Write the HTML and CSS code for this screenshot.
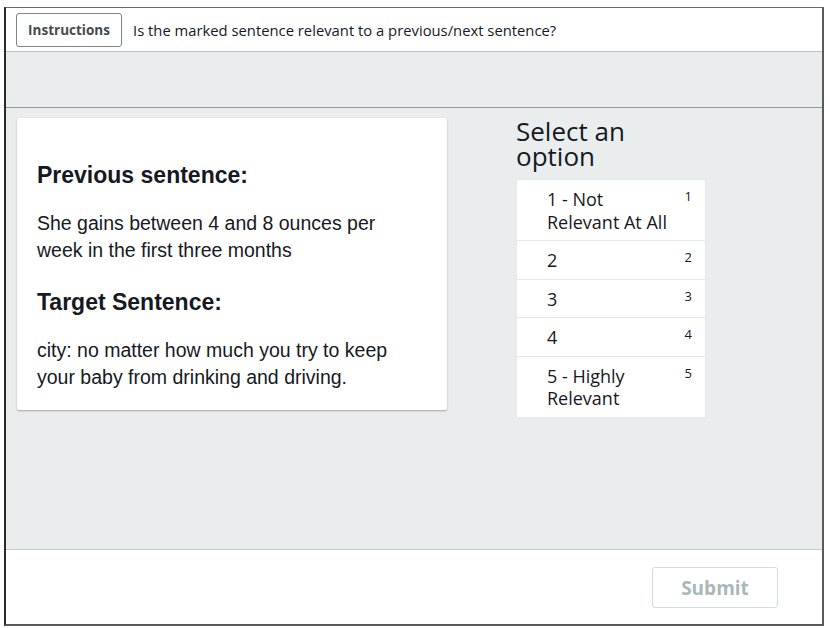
FILE: index.html
```html
<!DOCTYPE html>
<html>
<head>
<meta charset="utf-8">
<link rel="stylesheet" href="styles.css">
</head>
<body>
<div class="frame">
  <header class="topbar">
    <button class="instr-btn">Instructions</button>
    <span class="question">Is the marked sentence relevant to a previous/next sentence?</span>
  </header>
  <div class="band"></div>
  <main class="content">
    <section class="card">
      <h2 class="card-heading first">Previous sentence:</h2>
      <p class="card-text">She gains between 4 and 8 ounces per week in the first three months</p>
      <h2 class="card-heading">Target Sentence:</h2>
      <p class="card-text last">city: no matter how much you try to keep your baby from drinking and driving.</p>
    </section>
    <section class="picker">
      <h3 class="picker-title">Select an option</h3>
      <ul class="options">
        <li class="option"><span class="opt-label">1 - Not <span class="nowrap">Relevant At All</span></span><span class="opt-key">1</span></li>
        <li class="option"><span class="opt-label">2</span><span class="opt-key">2</span></li>
        <li class="option"><span class="opt-label">3</span><span class="opt-key">3</span></li>
        <li class="option"><span class="opt-label">4</span><span class="opt-key">4</span></li>
        <li class="option"><span class="opt-label">5 - Highly Relevant</span><span class="opt-key">5</span></li>
      </ul>
    </section>
  </main>
  <footer class="footer">
    <button class="submit-btn">Submit</button>
  </footer>
</div>
</body>
</html>
```

FILE: styles.css
```css
* { box-sizing: border-box; }
html, body { margin: 0; padding: 0; background: #ffffff; }
body { width: 830px; height: 628px; overflow: hidden; }

.frame {
  margin: 7px 0 0 4px;
  width: 820px;
  height: 619px;
  border-top: 1px solid #6a6a6a;
  border-left: 2px solid #2a2a2a;
  border-right: 2px solid #5a5a5a;
  border-bottom: 2px solid #5a5a5a;
  display: flex;
  flex-direction: column;
  font-family: "Open Sans", "Noto Sans", sans-serif;
  color: #16191f;
}

.topbar {
  height: 44px;
  flex: none;
  display: flex;
  align-items: center;
  gap: 11px;
  padding: 0 0 0 10px;
  border-bottom: 1px solid #b8c2c3;
  background: #fff;
}

.instr-btn {
  height: 34px;
  width: 106px;
  padding: 0;
  border: 1px solid #7d8585;
  border-radius: 3px;
  background: #fff;
  font-family: "Open Sans", sans-serif;
  font-size: 13.5px;
  font-weight: 700;
  color: #444b4c;
}

.question {
  font-size: 14.8px;
  color: #16191f;
}

.band {
  height: 56px;
  flex: none;
  background: #e9eded;
  border-bottom: 1px solid #8e9a9b;
}

.content {
  flex: 1;
  background: #e9eded;
  display: flex;
  align-items: flex-start;
  padding: 10px 0 0 11px;
  gap: 69px;
  border-bottom: 1px solid #c4cccd;
}

.card {
  width: 430px;
  background: #fff;
  padding: 20px 20px 19px 20px;
  box-shadow: 0 1px 2px rgba(0,0,0,0.3);
  border-radius: 2px;
  font-family: "Liberation Sans", Arial, sans-serif;
}

.card-heading {
  margin: 0 0 22px;
  font-size: 23px;
  line-height: 26px;
  font-weight: 700;
  color: #16191f;
}
.card-heading.first { margin-top: 24px; }

.card-text {
  margin: 0 0 25px;
  max-width: 370px;
  font-size: 19.5px;
  line-height: 27px;
  color: #16191f;
}
.card-text.last { margin-bottom: 0; }

.picker {
  width: 190px;
  padding-top: 1px;
}

.picker-title {
  margin: 0 0 10px;
  max-width: 150px;
  font-size: 26px;
  line-height: 25px;
  font-weight: 400;
  color: #16191f;
}

.options {
  list-style: none;
  margin: 0;
  padding: 0;
  width: 190px;
  background: #fff;
  border: 1px solid #e4e8e8;
}

.option {
  display: flex;
  justify-content: space-between;
  align-items: flex-start;
  padding: 8px 13px 7px 30px;
  border-top: 1px solid #e4e8e8;
}
.option:first-child { border-top: none; }

.opt-label {
  font-size: 18px;
  line-height: 22.5px;
  max-width: 136px;
}

.nowrap { white-space: nowrap; }

.opt-key {
  font-size: 13px;
  line-height: 16px;
  color: #16191f;
}

.footer {
  flex: 1;
  max-height: 74px;
  display: flex;
  justify-content: flex-end;
  align-items: flex-start;
  padding: 17px 44px 0 0;
  background: #fff;
}

.submit-btn {
  width: 126px;
  height: 41px;
  border: 1px solid #d5dbdb;
  border-radius: 3px;
  background: #fff;
  font-family: "Open Sans", sans-serif;
  font-size: 19px;
  font-weight: 700;
  color: #aab7b8;
}
```
